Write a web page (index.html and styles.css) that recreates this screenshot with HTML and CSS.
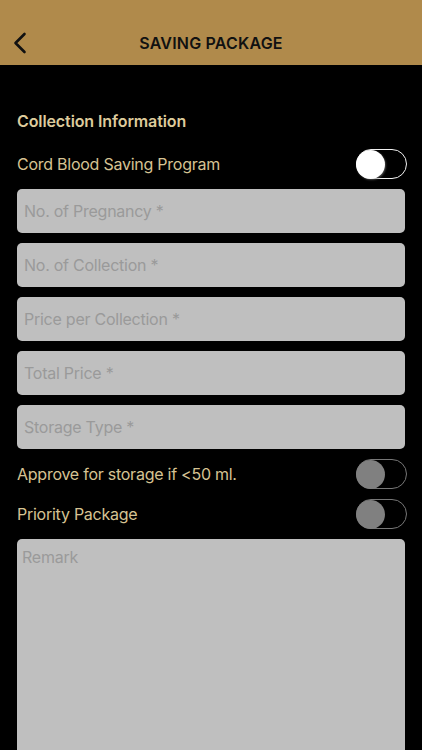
FILE: index.html
```html
<!DOCTYPE html>
<html lang="en">

<head>
    <meta charset="UTF-8">
    <meta name="viewport" content="width=device-width, initial-scale=1.0">
    <title>Saving Package</title>
    <link rel="stylesheet" href="styles.css">
</head>

<body>
    <header class="topbar">
        <a class="back" href="#">
            <svg width="14" height="22" viewBox="0 0 14 22">
                <path d="M11.5 2 L2.5 11 L11.5 20" fill="none" stroke="#111" stroke-width="2.6" stroke-linecap="round" stroke-linejoin="round"/>
            </svg>
        </a>
        <h1>SAVING PACKAGE</h1>
    </header>

    <form class="package">
        <h2>Collection Information</h2>

        <div class="row">
            <span>Cord Blood Saving Program</span>
            <span class="toggle on"><span class="knob"></span></span>
        </div>

        <input type="text" placeholder="No. of Pregnancy *">
        <input type="text" placeholder="No. of Collection *">
        <input type="text" placeholder="Price per Collection *">
        <input type="text" placeholder="Total Price *">
        <input type="text" placeholder="Storage Type *">

        <div class="row">
            <span>Approve for storage if &lt;50 ml.</span>
            <span class="toggle"><span class="knob"></span></span>
        </div>

        <div class="row">
            <span>Priority Package</span>
            <span class="toggle"><span class="knob"></span></span>
        </div>

        <textarea placeholder="Remark"></textarea>
    </form>
</body>

</html>
```

FILE: styles.css
```css
body {
    margin: 0;
    background-color: #000;
    font-family: Inter, "Noto Sans", sans-serif;
    overflow: hidden;
}

.topbar {
    height: 45px;
    padding-top: 20px;
    background-color: #b08a4b;
    display: flex;
    align-items: center;
    justify-content: center;
    position: relative;
}

.topbar h1 {
    margin: 0;
    font-size: 16px;
    font-weight: 600;
    color: #111;
    letter-spacing: 0.2px;
}

.back {
    position: absolute;
    left: 13px;
    top: 32px;
    display: flex;
}

.package {
    display: flex;
    flex-direction: column;
    gap: 10px;
    padding: 0 17px;
}

.package h2 {
    margin: 46px 0 8px;
    font-size: 16px;
    line-height: 20px;
    font-weight: 600;
    color: #ddcb9c;
    letter-spacing: -0.1px;
}

.row {
    height: 30px;
    display: flex;
    align-items: center;
    justify-content: space-between;
    font-size: 16px;
    letter-spacing: -0.25px;
    color: #d6c393;
}

.toggle {
    width: 49px;
    height: 28px;
    border: 1.5px solid #777;
    border-radius: 16px;
    margin-right: -2px;
    display: flex;
    align-items: center;
}

.knob {
    width: 29px;
    height: 29px;
    border-radius: 50%;
    background-color: #808080;
    margin-left: -1px;
}

.toggle.on {
    border-color: #f2f2f2;
}

.toggle.on .knob {
    background-color: #fff;
    box-shadow: 1px 1px 2px rgba(120, 120, 120, 0.6);
}

input,
textarea {
    box-sizing: border-box;
    width: 100%;
    border: none;
    border-radius: 5px;
    background-color: #bfbfbf;
    font-family: Inter, "Noto Sans", sans-serif;
    font-size: 16px;
    letter-spacing: -0.25px;
    color: #333;
    margin: 0;
}

input {
    height: 44px;
    padding: 0 7px;
}

textarea {
    height: 260px;
    padding: 8px 5px;
    line-height: 20px;
    resize: none;
}

input::placeholder,
textarea::placeholder {
    color: #9a9a9a;
}
```
